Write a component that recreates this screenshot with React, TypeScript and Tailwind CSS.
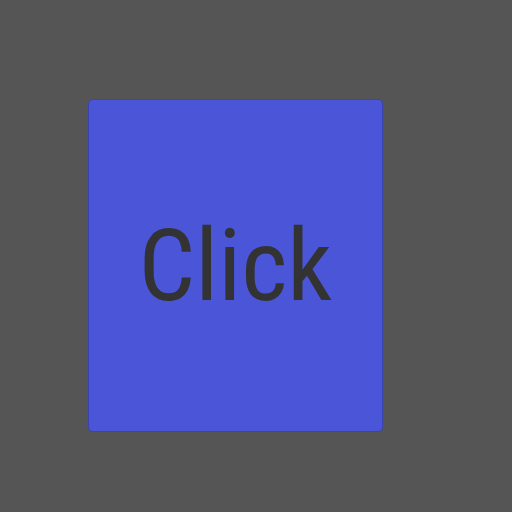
export default function App() {
  return (
    <div className="w-[512px] h-[512px] bg-[#555555] pt-[99px] pl-[88px]">
      <button
        type="button"
        className="flex h-[333px] w-[295px] items-center justify-center rounded-[5px] border border-[#3a44b0] bg-[#4a55d8] text-[100px] text-[#333333]"
        style={{ fontFamily: "'Roboto Condensed', 'Liberation Sans', sans-serif" }}
      >
        Click
      </button>
    </div>
  );
}
